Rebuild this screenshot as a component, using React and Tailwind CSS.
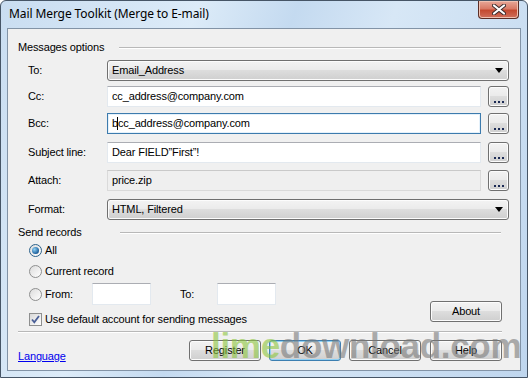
import React from "react";

const font = "font-['Liberation_Sans',Arial,sans-serif]";

const btnBg =
  "bg-[linear-gradient(to_bottom,#f3f3f3_0%,#ebebeb_45%,#dddddd_50%,#cfcfcf_100%)]";

function Button({ children, isDefault = false, className = "" }) {
  return (
    <div
      className={`flex h-[21px] w-[72px] items-center justify-center rounded-[3px] border text-[11px] text-black ${btnBg} ${
        isDefault
          ? "border-[#3c7fb1] shadow-[inset_0_0_0_1px_#8fd0f4]"
          : "border-[#707070] shadow-[inset_0_0_0_1px_#fcfcfc]"
      } ${className}`}
    >
      {children}
    </div>
  );
}

function DotsButton() {
  return (
    <div
      className={`ml-[7px] flex h-[21px] w-[21px] shrink-0 items-end justify-center rounded-[3px] border border-[#707070] pb-[3px] shadow-[inset_0_0_0_1px_#fcfcfc] ${btnBg}`}
    >
      <div className="flex gap-[2px]">
        <span className="h-[2px] w-[2px] bg-[#1b2a55]" />
        <span className="h-[2px] w-[2px] bg-[#1b2a55]" />
        <span className="h-[2px] w-[2px] bg-[#1b2a55]" />
      </div>
    </div>
  );
}

function Select({ value }) {
  return (
    <div
      className={`flex h-[21px] flex-1 items-center justify-between rounded-[3px] border border-[#707070] pl-[4px] pr-[5px] shadow-[inset_0_0_0_1px_#fcfcfc] ${btnBg}`}
    >
      <span>{value}</span>
      <svg width="8" height="5" viewBox="0 0 8 5">
        <path d="M0 0h8L4 5z" fill="#000" />
      </svg>
    </div>
  );
}

function TextBox({ value, focused = false, readOnly = false, cursorAt = null }) {
  const border = focused
    ? "border-[#3d7bad] border-t-[#3d7bad]"
    : readOnly
      ? "border-[#dadada] border-t-[#c9c9c9]"
      : "border-[#e3e9ef] border-t-[#abadb3]";
  return (
    <div
      className={`flex h-[21px] flex-1 items-center border pl-[4px] ${border} ${
        readOnly ? "bg-[#efefef]" : "bg-white"
      } ${focused ? "shadow-[inset_0_0_0_1px_#e4f1fb]" : ""}`}
    >
      {cursorAt !== null ? (
        <span>
          {value.slice(0, cursorAt)}
          <span className="relative inline-block w-0">
            <span className="absolute -left-[1px] -top-[10px] h-[13px] w-[1px] bg-black" />
          </span>
          {value.slice(cursorAt)}
        </span>
      ) : (
        <span>{value}</span>
      )}
    </div>
  );
}

function Row({ label, children, className = "" }) {
  return (
    <div className={`flex items-center pr-[11px] ${className}`}>
      <div className="w-[99px] shrink-0 pl-[20px]">{label}</div>
      {children}
    </div>
  );
}

function SectionHeader({ title, lineLeft, className = "" }) {
  return (
    <div className={`flex h-[14px] items-center pl-[10px] pr-[19px] ${className}`}>
      <span className="shrink-0">{title}</span>
      <div
        className="h-[1px] flex-1 bg-[#b8b8b8] shadow-[0_1px_0_#ffffff]"
        style={{ marginLeft: lineLeft }}
      />
    </div>
  );
}

function Radio({ checked = false }) {
  return (
    <div
      className={`flex h-[13px] w-[13px] shrink-0 items-center justify-center rounded-full border ${
        checked ? "border-[#2c628b]" : "border-[#8e8f8f]"
      } bg-[linear-gradient(to_bottom_right,#dcdcdc,#ffffff)]`}
    >
      {checked && (
        <div className="h-[7px] w-[7px] rounded-full bg-[radial-gradient(circle_at_35%_35%,#8ed1f6,#1d5f9b_70%,#0b3a66)]" />
      )}
    </div>
  );
}

function Checkbox() {
  return (
    <div className="flex h-[13px] w-[13px] shrink-0 items-center justify-center border border-[#8e8f8f] bg-[linear-gradient(to_bottom_right,#d8d8d8,#ffffff)]">
      <svg width="9" height="9" viewBox="0 0 9 9">
        <path
          d="M1 4.5l2.3 2.8L8 1"
          fill="none"
          stroke="#4a5f97"
          strokeWidth="1.8"
        />
      </svg>
    </div>
  );
}

export default function App() {
  return (
    <div className="h-[378px] w-[529px] overflow-hidden bg-white">
      <div
        className={`relative flex h-[378px] w-[528px] flex-col rounded-t-[6px] border border-[#465566] bg-[linear-gradient(110deg,#c9ddf1_0%,#dcebf8_30%,#c4daf0_45%,#d7e7f6_60%,#bfd6ee_100%)] ${font} text-[11px] tracking-[-0.15px] text-black`}
      >
        {/* title bar */}
        <div className="flex h-[27px] shrink-0 items-start">
          <div className="pl-[8px] pt-[4px] text-[12px] font-['Noto_Sans',Arial,sans-serif] tracking-[-0.1px]">
            Mail Merge Toolkit (Merge to E-mail)
          </div>
          <div className="ml-auto mr-[8px] flex h-[18px] w-[41px] items-center justify-center rounded-b-[4px] border border-t-0 border-[#5b2e26] bg-[linear-gradient(to_bottom,#e8a898_0%,#d97a66_45%,#c44a30_55%,#d0705c_100%)] shadow-[inset_0_0_0_1px_#f0c0b0]">
            <svg width="14" height="11" viewBox="0 0 14 11">
              <path
                d="M2 1.5L12 9.5M12 1.5L2 9.5"
                stroke="#3a2a2a"
                strokeWidth="4"
                strokeLinecap="round"
              />
              <path
                d="M2 1.5L12 9.5M12 1.5L2 9.5"
                stroke="#ffffff"
                strokeWidth="2.2"
                strokeLinecap="round"
              />
            </svg>
          </div>
        </div>

        {/* client area */}
        <div className="ml-[6px] flex h-[343px] w-[514px] flex-col border border-[#8293a6] bg-[#f0f0f0]">
          <SectionHeader title="Messages options" lineLeft="15px" className="mt-[11px]" />

          <Row label="To:" className="mt-[6px]">
            <Select value="Email_Address" />
          </Row>

          <Row label="Cc:" className="mt-[5px]">
            <TextBox value="cc_address@company.com" />
            <DotsButton />
          </Row>

          <Row label="Bcc:" className="mt-[6px]">
            <TextBox value="bcc_address@company.com" focused cursorAt={1} />
            <DotsButton />
          </Row>

          <Row label="Subject line:" className="mt-[8px]">
            <TextBox value={"Dear FIELD\u201dFirst\u201d!"} />
            <DotsButton />
          </Row>

          <Row label="Attach:" className="mt-[7px]">
            <TextBox value="price.zip" readOnly />
            <DotsButton />
          </Row>

          <Row label="Format:" className="mt-[8px]">
            <Select value="HTML, Filtered" />
          </Row>

          <SectionHeader title="Send records" lineLeft="38px" className="mt-[5px]" />

          <div className="flex items-end pr-[18px]">
            <div className="flex flex-col pl-[21px]">
              <label className="mt-[4px] flex h-[14px] items-center gap-[3px]">
                <Radio checked />
                <span>All</span>
              </label>
              <label className="mt-[7px] flex h-[14px] items-center gap-[3px]">
                <Radio />
                <span>Current record</span>
              </label>
              <div className="mt-[5px] flex h-[22px] items-center">
                <label className="flex w-[63px] items-center gap-[3px]">
                  <Radio />
                  <span>From:</span>
                </label>
                <div className="h-[22px] w-[59px] border border-[#e3e9ef] border-t-[#abadb3] bg-white" />
                <span className="ml-[29px] w-[37px]">To:</span>
                <div className="h-[22px] w-[59px] border border-[#e3e9ef] border-t-[#abadb3] bg-white" />
              </div>
              <label className="mt-[7px] flex h-[14px] items-center gap-[3px]">
                <Checkbox />
                <span>Use default account for sending messages</span>
              </label>
            </div>
            <Button className="mb-[4px] ml-auto">About</Button>
          </div>

          <div className="ml-[10px] mr-[18px] mt-[5px] h-[1px] bg-[#b8b8b8] shadow-[0_1px_0_#ffffff]" />

          <div className="relative mt-[8px] flex items-start pl-[10px] pr-[18px]">
            <a href="#" className="mt-[8px] text-[#0000ee] underline">
              Language
            </a>
            <div className="ml-auto flex gap-[8px]">
              <Button>Register</Button>
              <Button isDefault>OK</Button>
              <Button className="mr-[1px]">Cancel</Button>
              <Button>Help</Button>
            </div>
            {/* watermark */}
            <div className="pointer-events-none absolute left-[203px] -top-[12px] whitespace-nowrap font-['Liberation_Sans',Arial,sans-serif] text-[35px] font-bold tracking-[-0.3px] leading-none">
              <span className="text-[#8dc63f] opacity-60">lime</span>
              <span className="text-[#7a7a7a] opacity-60">download.com</span>
            </div>
          </div>
        </div>
      </div>
    </div>
  );
}
